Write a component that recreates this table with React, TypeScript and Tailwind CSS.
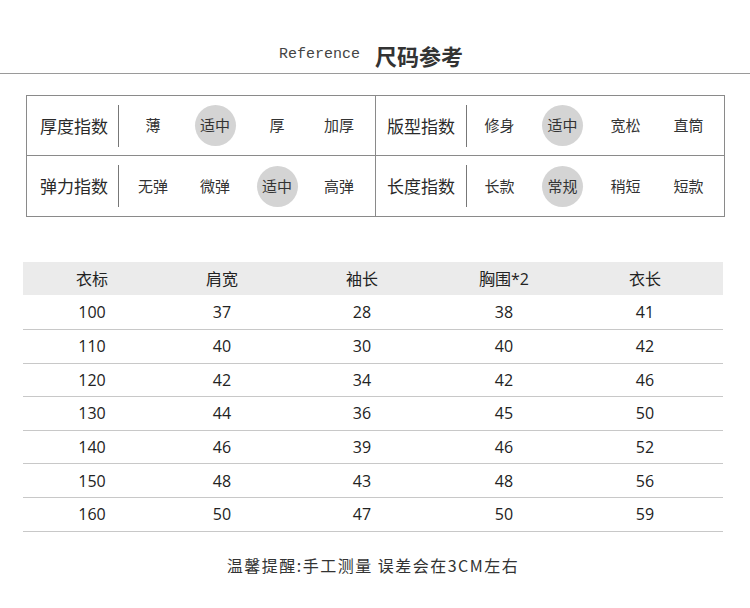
const indexRows = [
  [
    { label: '厚度指数', options: ['薄', '适中', '厚', '加厚'], active: 1 },
    { label: '版型指数', options: ['修身', '适中', '宽松', '直筒'], active: 1 },
  ],
  [
    { label: '弹力指数', options: ['无弹', '微弹', '适中', '高弹'], active: 2 },
    { label: '长度指数', options: ['长款', '常规', '稍短', '短款'], active: 1 },
  ],
]

const sizeRows = [
  ['100', '37', '28', '38', '41'],
  ['110', '40', '30', '40', '42'],
  ['120', '42', '34', '42', '46'],
  ['130', '44', '36', '45', '50'],
  ['140', '46', '39', '46', '52'],
  ['150', '48', '43', '48', '56'],
  ['160', '50', '47', '50', '59'],
]

const cols = 'grid grid-cols-[138px_122px_158px_126px_156px]'

function IndexHalf({ label, options, active, left }: { label: string; options: string[]; active: number; left: boolean }) {
  return (
    <div className={left ? 'w-[349px] flex items-center border-r border-[#8a8a8a]' : 'flex-1 flex items-center'}>
      <span className={left ? 'pl-[13px] text-[17px] text-[#2a2a2a]' : 'pl-[11px] text-[17px] text-[#2a2a2a]'}>{label}</span>
      <span className={left ? 'ml-[10px] w-px h-[42px] bg-[#777]' : 'ml-[11px] w-px h-[42px] bg-[#777]'} />
      <div className={left ? 'ml-[3px] flex items-center' : 'ml-[1px] flex items-center'}>
        {options.map((o, i) => (
          <div key={o + i} className={left ? 'w-[62px] h-[41px] flex items-center justify-center' : 'w-[63px] h-[41px] flex items-center justify-center'}>
            {i === active ? (
              <span className="w-[41px] h-[41px] rounded-full bg-[#d4d4d4] flex items-center justify-center text-[15px] text-[#333]">
                {o}
              </span>
            ) : (
              <span className="text-[15px] text-[#333]">{o}</span>
            )}
          </div>
        ))}
      </div>
    </div>
  )
}

export default function App() {
  return (
    <div className="w-[750px] h-[608px] bg-white font-['Noto_Sans_CJK_SC',sans-serif] overflow-hidden">
      {/* title */}
      <div className="pt-[40px] pb-[3px] pr-[8px] flex items-center justify-center gap-[15px] border-b border-[#9a9a9a]">
        <span className="font-['Liberation_Mono',monospace] text-[15px] leading-[30px] text-[#444]">Reference</span>
        <span className="text-[22px] leading-[30px] font-semibold text-[#333]">尺码参考</span>
      </div>

      {/* index box */}
      <div className="mt-[21px] ml-[26px] w-[699px] border border-[#8a8a8a]">
        {indexRows.map((row, r) => (
          <div key={r} className={r === 0 ? 'h-[60px] flex border-b border-[#8a8a8a]' : 'h-[60px] flex'}>
            <IndexHalf {...row[0]} left />
            <IndexHalf {...row[1]} left={false} />
          </div>
        ))}
      </div>

      {/* size table */}
      <div className="mt-[45px] ml-[23px] w-[700px] font-['Open_Sans','Noto_Sans_CJK_SC',sans-serif] text-[16px] text-[#222]">
        <div className={`${cols} h-[33px] items-center bg-[#ebebeb]`}>
          {['衣标', '肩宽', '袖长', '胸围*2', '衣长'].map(h => (
            <span key={h} className="text-center">{h}</span>
          ))}
        </div>
        {sizeRows.map((row, r) => (
          <div key={row[0]} className={`${cols} ${r === 0 ? 'h-[35px]' : 'h-[33.6px]'} items-center border-b border-[#c8c8c8]`}>
            {row.map((v, i) => (
              <span key={i} className="text-center">{v}</span>
            ))}
          </div>
        ))}
      </div>

      {/* note */}
      <p className="mt-[21px] text-center text-[16px] leading-[24px] tracking-[1.5px] text-[#333] pr-[4px]">
        温馨提醒:手工测量 误差会在3CM左右
      </p>
    </div>
  )
}
